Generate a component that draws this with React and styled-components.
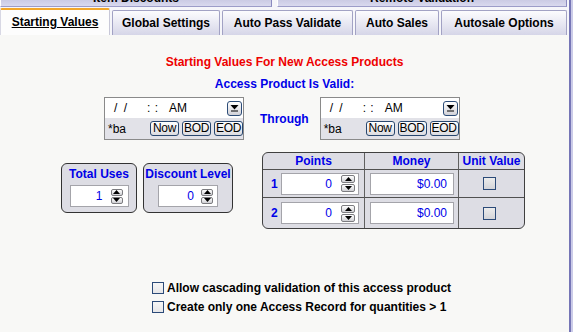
import React from 'react';
import styled, { createGlobalStyle } from 'styled-components';

const Global = createGlobalStyle`
  html, body { margin: 0; padding: 0; width: 573px; height: 332px; overflow: hidden; background: #f8f8f6; }
  body { font-family: "Liberation Sans", Arial, sans-serif; font-size: 12px; color: #000; }
  * { box-sizing: border-box; }
`;

const BLUE = '#0000e8';

const Page = styled.div`
  display: flex;
  width: 573px;
  height: 332px;
`;

const Main = styled.div`
  width: 569px;
  display: flex;
  flex-direction: column;
`;

const Edge = styled.div`
  width: 4px;
  border-left: 2px solid #7676b6;
  background: #cbcbe8;
`;

const TopStrip = styled.div`
  height: 7px;
  display: flex;
  gap: 5px;
  overflow: hidden;
  background: #f6f6fa;
`;

const UpperTab = styled.div`
  width: ${p => p.$w}px;
  display: flex;
  align-items: flex-end;
  justify-content: center;
  padding-bottom: 1px;
  background: linear-gradient(#cbcbe4, #d9d9ee);
  border-left: 1px solid #ffffff;
  border-right: 1px solid #8a8abf;
  border-bottom: 1px solid #9c9cc8;
  font-weight: bold;
  line-height: 14px;
  white-space: nowrap;
`;

const TabBar = styled.div`
  height: 28px;
  display: flex;
  align-items: flex-end;
  gap: 2px;
  background: #f6f6fa;
`;

const Tab = styled.div`
  width: ${p => p.$w}px;
  height: ${p => (p.$active ? 27 : 25)}px;
  display: flex;
  align-items: center;
  justify-content: center;
  font-weight: bold;
  white-space: nowrap;
  border-radius: 2px 2px 0 0;
  ${p => p.$active ? `
    background: #fdfdfd;
    border-top: 2px solid #f2a62a;
    border-left: 1px solid #d8d8e4;
    border-right: 1px solid #c8c8d8;
    text-decoration: underline;
    padding-bottom: 1px;
  ` : `
    background: linear-gradient(#fcfcfe, #d6d6e8);
    border: 1px solid #a2a2c4;
    border-bottom: none;
  `}
`;

const Content = styled.div`
  flex: 1;
  display: flex;
  flex-direction: column;
  background: #f8f8f6;
  padding-top: 20px;
`;

const Heading = styled.div`
  text-align: center;
  font-weight: bold;
  line-height: 14px;
  color: ${p => p.$color};
  margin-top: ${p => p.$mt || 0}px;
`;

const DateRow = styled.div`
  display: flex;
  align-items: center;
  margin-top: 6px;
  padding-left: 104px;
`;

const DateBox = styled.div`
  width: 140px;
  height: 43px;
  border: 1px solid #8a8a8a;
  display: flex;
  flex-direction: column;
`;

const DateInput = styled.div`
  height: 20px;
  background: #ffffff;
  display: flex;
  align-items: center;
  padding-left: 9px;
  padding-right: 1px;
  white-space: pre;
  line-height: 14px;
`;

const DatePart = styled.span`
  margin-left: ${p => p.$ml || 0}px;
  word-spacing: ${p => p.$ws || 0}px;
`;

const DropBtn = styled.div`
  margin-left: auto;
  width: 15px;
  height: 15px;
  border: 1px solid #2d4d78;
  border-radius: 3px;
  background: linear-gradient(#ffffff, #d2d2d8);
  display: flex;
  align-items: center;
  justify-content: center;
`;

const DateButtons = styled.div`
  flex: 1;
  background: #e2e2e8;
  display: flex;
  align-items: center;
  justify-content: space-between;
  padding-left: 3px;
`;

const SmallBtnGroup = styled.div`
  display: flex;
  gap: 3px;
`;

const SmallBtn = styled.div`
  width: 29px;
  height: 15px;
  border: 1px solid #28476f;
  border-radius: 3px;
  background: linear-gradient(#ffffff, #dcdce0);
  display: flex;
  align-items: center;
  justify-content: center;
  font-size: 12px;
  line-height: 13px;
  letter-spacing: -0.3px;
`;

const Through = styled.div`
  margin: 0 11px 0 16px;
  font-weight: bold;
  color: ${BLUE};
`;

const LowerRow = styled.div`
  display: flex;
  align-items: flex-start;
  padding-left: 61px;
  margin-top: 12px;
`;

const FieldBox = styled.div`
  width: ${p => p.$w}px;
  height: 50px;
  margin-top: 11px;
  margin-right: ${p => p.$mr}px;
  border: 1px solid #333;
  border-radius: 6px;
  background: #dddde4;
  display: flex;
  flex-direction: column;
  align-items: center;
  padding-top: 3px;
`;

const FieldTitle = styled.div`
  font-weight: bold;
  color: ${BLUE};
  line-height: 14px;
  white-space: nowrap;
`;

const NumInput = styled.div`
  width: ${p => p.$w}px;
  height: 22px;
  margin-top: ${p => p.$mt || 0}px;
  background: #fff;
  border: 1px solid #a4a4aa;
  display: flex;
  align-items: center;
  justify-content: flex-end;
  gap: ${p => p.$gap || 8}px;
  padding-right: ${p => p.$pr || 5}px;
  color: ${BLUE};
  font-size: 12px;
`;

const Spin = styled.div`
  display: flex;
  flex-direction: column;
  gap: 1px;
`;

const SpinBtn = styled.div`
  width: ${p => p.$w || 12}px;
  height: ${p => p.$h || 7}px;
  border: 1px solid #7c7c80;
  border-radius: 2px;
  background: linear-gradient(#ffffff, #d0d0d4);
  display: flex;
  align-items: center;
  justify-content: center;
`;

const Table = styled.div`
  width: 263px;
  height: 77px;
  border: 1px solid #404040;
  border-radius: 6px;
  background: #dddde4;
  display: grid;
  grid-template-columns: 102px 94px 65px;
  grid-template-rows: 17px 28px 30px;
  overflow: hidden;
`;

const HeadCell = styled.div`
  display: flex;
  align-items: center;
  justify-content: center;
  font-weight: bold;
  color: ${BLUE};
  border-bottom: 1px solid #505050;
  border-right: ${p => (p.$last ? 'none' : '1px solid #606060')};
  white-space: nowrap;
`;

const Cell = styled.div`
  display: flex;
  align-items: center;
  justify-content: ${p => p.$center ? 'center' : 'flex-start'};
  padding-left: ${p => p.$pl || 0}px;
  padding-right: ${p => p.$pr || 0}px;
  border-right: ${p => (p.$last ? 'none' : '1px solid #606060')};
  border-bottom: ${p => (p.$bottom ? '1px solid #505050' : 'none')};
`;

const RowNum = styled.span`
  width: 10px;
  font-weight: bold;
  color: ${BLUE};
`;

const Check = styled.div`
  width: ${p => p.$s}px;
  height: ${p => p.$s}px;
  border: 1px solid #2b4a78;
  background: ${p => p.$light ? 'linear-gradient(#f6f6f6, #e6e6e8)' : 'linear-gradient(#ececec, #d4d4d8)'};
  flex-shrink: 0;
`;

const OptionList = styled.div`
  margin-top: 49px;
  padding-left: 152px;
  display: flex;
  flex-direction: column;
`;

const OptionRow = styled.div`
  height: 19px;
  display: flex;
  align-items: center;
  gap: 3px;
  font-weight: bold;
  white-space: nowrap;
`;

const TriDown = () => (
  <svg width="9" height="8" viewBox="0 0 9 8">
    <path d="M0.5 1 L8.5 1 L4.5 5.5 Z" fill="#000" />
    <rect x="1" y="6.5" width="7" height="1" fill="#000" />
  </svg>
);

const Arrow = ({ up }) => (
  <svg width="7" height="4" viewBox="0 0 7 4">
    <path d={up ? 'M0 4 L3.5 0 L7 4 Z' : 'M0 0 L7 0 L3.5 4 Z'} fill="#000" />
  </svg>
);

const Spinner = ({ w, h }) => (
  <Spin>
    <SpinBtn $w={w} $h={h}><Arrow up /></SpinBtn>
    <SpinBtn $w={w} $h={h}><Arrow /></SpinBtn>
  </Spin>
);

const DateField = () => (
  <DateBox>
    <DateInput>
      <DatePart $ws={3}>/ /</DatePart>
      <DatePart $ml={20} $ws={1}>: :</DatePart>
      <DatePart $ml={11}>AM</DatePart>
      <DropBtn><TriDown /></DropBtn>
    </DateInput>
    <DateButtons>
      <span>*ba</span>
      <SmallBtnGroup>
        <SmallBtn>Now</SmallBtn>
        <SmallBtn>BOD</SmallBtn>
        <SmallBtn>EOD</SmallBtn>
      </SmallBtnGroup>
    </DateButtons>
  </DateBox>
);

const tabs = [
  { label: 'Starting Values', w: 110, active: true },
  { label: 'Global Settings', w: 108 },
  { label: 'Auto Pass Validate', w: 131 },
  { label: 'Auto Sales', w: 84 },
  { label: 'Autosale Options', w: 126 },
];

const rows = [1, 2];

export default function App() {
  return (
    <>
      <Global />
      <Page>
        <Main>
          <TopStrip>
            <UpperTab $w={272}>Item Discounts</UpperTab>
            <UpperTab $w={290}>Remote Validation</UpperTab>
          </TopStrip>
          <TabBar>
            {tabs.map(t => (
              <Tab key={t.label} $w={t.w} $active={t.active}>{t.label}</Tab>
            ))}
          </TabBar>
          <Content>
            <Heading $color="#ee0000">Starting Values For New Access Products</Heading>
            <Heading $color={BLUE} $mt={8}>Access Product Is Valid:</Heading>
            <DateRow>
              <DateField />
              <Through>Through</Through>
              <DateField />
            </DateRow>
            <LowerRow>
              <FieldBox $w={76} $mr={6}>
                <FieldTitle>Total Uses</FieldTitle>
                <NumInput $w={59} $mt={4} $pr={5} $gap={8}>
                  1
                  <Spinner />
                </NumInput>
              </FieldBox>
              <FieldBox $w={90} $mr={29}>
                <FieldTitle>Discount Level</FieldTitle>
                <NumInput $w={60} $mt={4} $pr={4} $gap={7}>
                  0
                  <Spinner />
                </NumInput>
              </FieldBox>
              <Table>
                <HeadCell>Points</HeadCell>
                <HeadCell>Money</HeadCell>
                <HeadCell $last>Unit Value</HeadCell>
                {rows.map(r => (
                  <React.Fragment key={r}>
                    <Cell $pl={8} $bottom={r === 1}>
                      <RowNum>{r}</RowNum>
                      <NumInput $w={78} $pr={3} $gap={9}>
                        0
                        <Spinner w={14} h={8} />
                      </NumInput>
                    </Cell>
                    <Cell $pl={5} $bottom={r === 1}>
                      <NumInput $w={84} $pr={6}>$0.00</NumInput>
                    </Cell>
                    <Cell $last $center $pr={4} $bottom={r === 1}>
                      <Check $s={13} />
                    </Cell>
                  </React.Fragment>
                ))}
              </Table>
            </LowerRow>
            <OptionList>
              <OptionRow>
                <Check $s={12} $light />
                Allow cascading validation of this access product
              </OptionRow>
              <OptionRow>
                <Check $s={12} $light />
                Create only one Access Record for quantities &gt; 1
              </OptionRow>
            </OptionList>
          </Content>
        </Main>
        <Edge />
      </Page>
    </>
  );
}
